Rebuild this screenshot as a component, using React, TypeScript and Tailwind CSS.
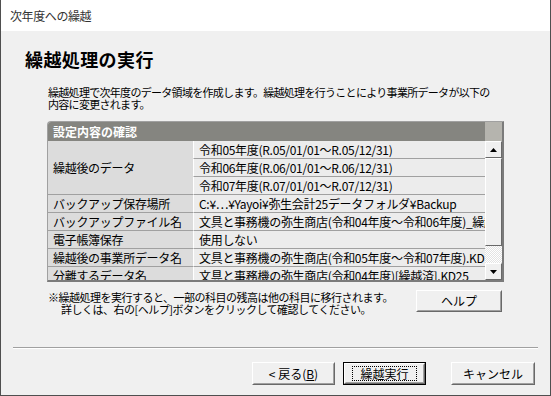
import React from 'react';

const font = { fontFamily: '"Noto Sans CJK JP", "Noto Sans", sans-serif' };

function Btn({ children, isDefault = false, className = '' }: { children: React.ReactNode; isDefault?: boolean; className?: string }) {
  return (
    <div className={`${isDefault ? 'border border-black' : ''} ${className}`}>
      <div className="h-full border border-t-white border-l-white border-r-[#696969] border-b-[#696969] bg-[#f0f0f0]">
        <div className="h-full border border-transparent border-r-[#a0a0a0] border-b-[#a0a0a0] flex items-center justify-center">
          {isDefault ? (
            <div className="border border-dotted border-black px-[7px] leading-[13px]">{children}</div>
          ) : (
            children
          )}
        </div>
      </div>
    </div>
  );
}

export default function App() {
  const leftRows = [
    { label: 'バックアップ保存場所', value: 'C:¥…¥Yayoi¥弥生会計25データフォルダ¥Backup' },
    { label: 'バックアップファイル名', value: '文具と事務機の弥生商店(令和04年度～令和06年度)_繰越前' },
    { label: '電子帳簿保存', value: '使用しない' },
    { label: '繰越後の事業所データ名', value: '文具と事務機の弥生商店(令和05年度～令和07年度).KD' },
    { label: '分離するデータ名', value: '文具と事務機の弥生商店(令和04年度)[繰越済].KD25' },
  ];
  const years = [
    '令和05年度(R.05/01/01～R.05/12/31)',
    '令和06年度(R.06/01/01～R.06/12/31)',
    '令和07年度(R.07/01/01～R.07/12/31)',
  ];

  return (
    <div style={font} className="w-[551px] h-[396px] bg-[#f0f0f0] border-x border-b border-[#4f4f4f] flex flex-col text-[12px] text-black overflow-hidden">
      {/* Title bar */}
      <div className="h-[31px] bg-white flex items-center pl-[9px] text-[12px] tracking-[-0.4px] text-[#333]">
        次年度への繰越
      </div>

      {/* Heading */}
      <h1 className="mt-[18px] ml-[24px] text-[18px] font-bold leading-[20px] tracking-[0.4px]">繰越処理の実行</h1>

      {/* Description */}
      <p className="mt-[17px] ml-[47px] text-[11px] leading-[12px] tracking-[-0.7px]">
        繰越処理で次年度のデータ領域を作成します。繰越処理を行うことにより事業所データが以下の
        <br />
        内容に変更されます。
      </p>

      {/* Settings table */}
      <div className="mt-[11px] ml-[46px] w-[457px] h-[161px] border border-[#a0a0a0] border-r-2 border-b-2 border-r-[#7b7b7b] border-b-[#7b7b7b] rounded-tl-[4px] overflow-hidden flex flex-col">
        <div className="h-[19px] flex shrink-0">
          <div className="flex-1 bg-[#858580] text-white font-bold pl-[5px] leading-[19px] text-[12px]">設定内容の確認</div>
          <div className="w-[17px] bg-[#b5b4ae]" />
        </div>
        <div className="flex-1 flex overflow-hidden">
          <div className="flex-1 overflow-hidden">
            <div className="grid grid-cols-[145px_1fr] tracking-[-0.3px]">
              <div className="row-span-3 bg-[#dcdcdc] border-b border-[#a0a0a0] flex items-center pl-[5px] h-[54px]">繰越後のデータ</div>
              {years.map((y) => (
                <div key={y} className="h-[18px] bg-[#ececec] border-l border-l-white border-b border-[#a0a0a0] pl-[5px] leading-[18px] whitespace-nowrap overflow-hidden">
                  {y}
                </div>
              ))}
              {leftRows.map((r) => (
                <React.Fragment key={r.label}>
                  <div className="h-[18px] bg-[#dcdcdc] border-b border-[#a0a0a0] pl-[5px] leading-[18px] whitespace-nowrap">{r.label}</div>
                  <div className="h-[18px] bg-[#ececec] border-l border-l-white border-b border-[#a0a0a0] pl-[5px] leading-[18px] whitespace-nowrap overflow-hidden">
                    {r.value}
                  </div>
                </React.Fragment>
              ))}
            </div>
          </div>
          {/* Scrollbar */}
          <div className="w-[17px] flex flex-col bg-[#f4f4f4]">
            <div className="h-[17px] shrink-0 border border-t-white border-l-white border-r-[#696969] border-b-[#696969] bg-[#f0f0f0] flex items-center justify-center">
              <svg width="7" height="4" viewBox="0 0 7 4"><path d="M3.5 0L7 4H0z" fill="#000" /></svg>
            </div>
            <div className="h-[88px] shrink-0 border border-t-white border-l-white border-r-[#696969] border-b-[#696969] bg-[#f0f0f0]" />
            <div className="flex-1 bg-[repeating-conic-gradient(#ffffff_0%_25%,#e3e3e3_0%_50%)] bg-[length:2px_2px]" />
            <div className="h-[17px] shrink-0 border border-t-white border-l-white border-r-[#696969] border-b-[#696969] bg-[#f0f0f0] flex items-center justify-center">
              <svg width="7" height="4" viewBox="0 0 7 4"><path d="M0 0H7L3.5 4z" fill="#000" /></svg>
            </div>
          </div>
        </div>
      </div>

      {/* Note + help */}
      <div className="mt-[8px] ml-[47px] mr-[48px] flex items-start justify-between">
        <p className="mt-[1px] text-[11px] leading-[12px] tracking-[-0.5px]">
          ※繰越処理を実行すると、一部の科目の残高は他の科目に移行されます。
          <br />
          <span className="pl-[13px]">詳しくは、右の[ヘルプ]ボタンをクリックして確認してください。</span>
        </p>
        <Btn className="w-[86px] h-[22px]">ヘルプ</Btn>
      </div>

      {/* Separator */}
      <div className="mt-[32px] mx-[12px] border-t border-[#a0a0a0] border-b border-b-white" />

      {/* Footer buttons */}
      <div className="mt-[13px] flex justify-end pr-[15px]">
        <Btn className="w-[83px] h-[23px]">&lt; 戻る(<span className="underline">B</span>)</Btn>
        <Btn isDefault className="ml-[8px] w-[83px] h-[23px]">繰越実行</Btn>
        <Btn className="ml-[25px] w-[84px] h-[23px]">キャンセル</Btn>
      </div>
    </div>
  );
}
